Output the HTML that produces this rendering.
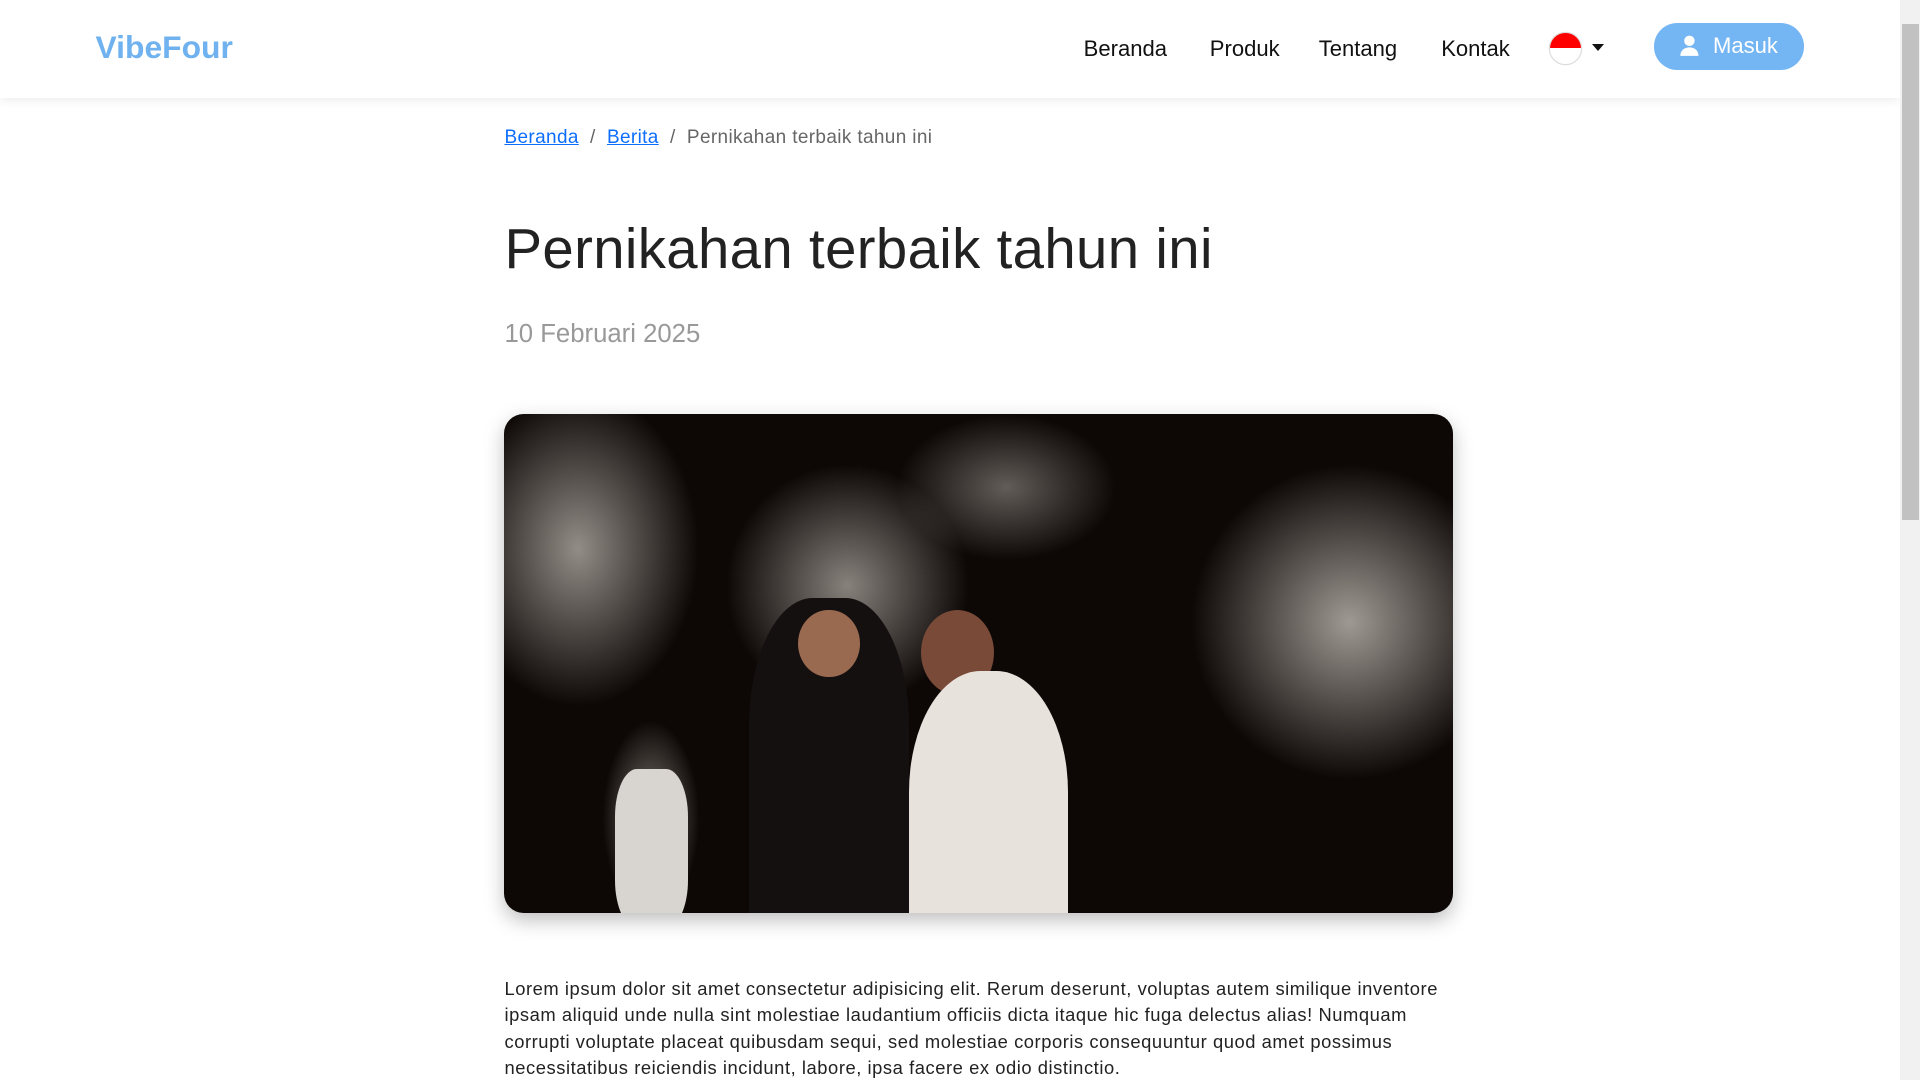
<!DOCTYPE html>
<html><head><meta charset="utf-8"><style>
html,body{margin:0;padding:0;}
html{background:#fff;overflow:hidden;}
body{zoom:1.22449;width:1568px;height:882px;position:relative;overflow:hidden;font-family:"Liberation Sans",sans-serif;color:#222;}
.nav{position:absolute;left:0;top:0;width:1552px;height:80px;background:#fff;box-shadow:0 2px 8px rgba(0,0,0,.08);z-index:2}
.logo{position:absolute;left:78px;top:24px;font-size:26px;font-weight:bold;color:#6fb2ef;letter-spacing:0px}
.ni{position:absolute;top:29px;font-size:18px;color:#111}
.flag{position:absolute;left:1266px;top:27px;width:25px;height:25px;border-radius:50%;overflow:hidden;box-shadow:0 0 0 1px #ddd}
.flag div{height:50%;background:#f00}
.caret{position:absolute;left:1300px;top:36px;border-left:5px solid transparent;border-right:5px solid transparent;border-top:6px solid #111}
.btn{position:absolute;left:1351px;top:19px;width:122px;height:38px;border-radius:19px;background:#74b5f3;color:#fff;font-size:18px}
.btn span{position:absolute;left:48px;top:8px}
.sb{position:absolute;left:1552px;top:0;width:16px;height:882px;background:#f1f1f1;z-index:3}
.sb .t{position:absolute;left:1px;top:20px;width:14px;height:405px;background:#c1c1c1}
.bc{position:absolute;left:412px;top:104px;font-size:15.5px;color:#666;letter-spacing:.3px;white-space:nowrap}
.bc a{color:#0d6efd;text-decoration:underline}
h1{position:absolute;left:412px;top:176px;margin:0;font-size:46px;font-weight:normal;color:#222;letter-spacing:.3px;white-space:nowrap}
.date{position:absolute;left:412px;top:261px;font-size:21px;color:#999}
.img{position:absolute;left:412px;top:338px;width:775px;height:408px;border-radius:16px;overflow:hidden;background:#0d0806;box-shadow:0 6px 16px rgba(0,0,0,.25)}
.img div{position:absolute;border-radius:50%}
p{position:absolute;left:412px;top:797px;width:820px;margin:0;font-size:15px;line-height:21.5px;color:#222;white-space:nowrap;letter-spacing:.45px}
</style></head><body>
<div class="nav">
<div class="logo">VibeFour</div>
<div class="ni" style="left:885px">Beranda</div>
<div class="ni" style="left:988px">Produk</div>
<div class="ni" style="left:1077px">Tentang</div>
<div class="ni" style="left:1177px">Kontak</div>
<div class="flag"><div></div></div>
<div class="caret"></div>
<div class="btn"><svg style="position:absolute;left:20px;top:10px" width="17" height="17" viewBox="0 0 16 16"><circle cx="8" cy="4.5" r="4" fill="#fff"/><path d="M1 16c0-4 3-6.5 7-6.5s7 2.5 7 6.5z" fill="#fff"/></svg><span>Masuk</span></div>
</div>
<div class="sb"><div class="t"></div></div>
<div class="bc"><a>Beranda</a> &nbsp;/&nbsp; <a>Berita</a> &nbsp;/&nbsp; Pernikahan terbaik tahun ini</div>
<h1>Pernikahan terbaik tahun ini</h1>
<div class="date">10 Februari 2025</div>
<div class="img">
<div style="left:-40px;top:-20px;width:200px;height:260px;background:radial-gradient(rgba(255,250,240,.55),rgba(255,250,240,0) 70%)"></div>
<div style="left:560px;top:40px;width:260px;height:260px;background:radial-gradient(rgba(255,250,240,.6),rgba(255,250,240,0) 70%)"></div>
<div style="left:180px;top:40px;width:200px;height:200px;background:radial-gradient(rgba(255,250,240,.5),rgba(255,250,240,0) 70%)"></div>
<div style="left:320px;top:0px;width:180px;height:120px;background:radial-gradient(rgba(255,250,240,.35),rgba(255,250,240,0) 70%)"></div>
<div style="left:80px;top:250px;width:80px;height:160px;background:radial-gradient(rgba(240,230,220,.5),rgba(240,230,220,0) 70%)"></div>
<div style="left:200px;top:150px;width:130px;height:260px;border-radius:40% 40% 0 0;background:#141010"></div>
<div style="left:240px;top:160px;width:50px;height:55px;background:#9a6a50"></div>
<div style="left:340px;top:160px;width:60px;height:70px;background:#7a4a38"></div>
<div style="left:330px;top:210px;width:130px;height:220px;border-radius:45% 45% 10% 10%;background:#e8e2dc"></div>
<div style="left:90px;top:290px;width:60px;height:130px;border-radius:30%;background:#d8d4d0"></div>
</div>
<p>Lorem ipsum dolor sit amet consectetur adipisicing elit. Rerum deserunt, voluptas autem similique inventore<br>ipsam aliquid unde nulla sint molestiae laudantium officiis dicta itaque hic fuga delectus alias! Numquam<br>corrupti voluptate placeat quibusdam sequi, sed molestiae corporis consequuntur quod amet possimus<br>necessitatibus reiciendis incidunt, labore, ipsa facere ex odio distinctio.</p>
</body></html>
